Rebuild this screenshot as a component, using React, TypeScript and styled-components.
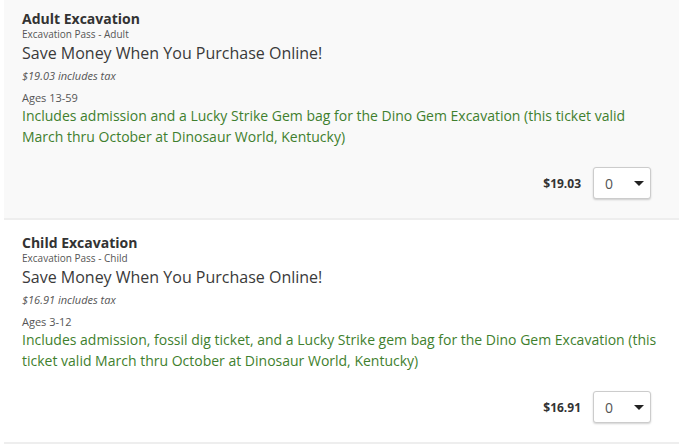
import React from 'react';
import styled, { createGlobalStyle } from 'styled-components';

const GlobalStyle = createGlobalStyle`
  html, body {
    margin: 0;
    padding: 0;
    background: #ffffff;
  }
  body {
    font-family: "Open Sans", "Liberation Sans", Arial, sans-serif;
    color: #333;
  }
`;

const List = styled.div`
  margin-top: -4px;
  padding: 0 21px 0 4px;
`;

const Card = styled.div<{ shaded?: boolean }>`
  display: flex;
  flex-direction: column;
  padding: 15px 16px 19px 18px;
  background: ${p => (p.shaded ? '#f9f9f9' : '#ffffff')};
  border-bottom: 2px solid #eeeeee;
`;

const Title = styled.div`
  font-size: 14px;
  font-weight: 700;
  line-height: 16px;
  color: #333;
`;

const Subtitle = styled.div`
  margin-top: 1px;
  font-size: 10px;
  line-height: 13px;
  color: #555;
`;

const Promo = styled.div`
  margin-top: 1px;
  font-size: 16px;
  line-height: 22px;
  color: #3a3a3a;
`;

const Tax = styled.div`
  margin-top: 4px;
  font-size: 11px;
  font-style: italic;
  line-height: 15px;
  color: #555;
`;

const Ages = styled.div`
  margin-top: 7px;
  font-size: 11px;
  line-height: 15px;
  color: #555;
`;

const Description = styled.div`
  font-size: 14px;
  line-height: 21px;
  color: #3f7f2e;
`;

const PriceRow = styled.div`
  display: flex;
  align-items: center;
  justify-content: flex-end;
  gap: 12px;
  margin-top: 20px;
  padding-right: 12px;
`;

const Price = styled.span`
  font-size: 12px;
  font-weight: 700;
  color: #333;
`;

const Select = styled.div`
  display: flex;
  align-items: center;
  justify-content: space-between;
  box-sizing: border-box;
  width: 58px;
  height: 32px;
  padding: 0 6px 0 11px;
  border: 1px solid #cccccc;
  border-radius: 3px;
  background: #fff;
  box-shadow: 0 1px 2px rgba(0, 0, 0, 0.18);
  font-size: 14px;
  color: #555;
`;

const Caret = styled.span`
  width: 0;
  height: 0;
  border-left: 5px solid transparent;
  border-right: 5px solid transparent;
  border-top: 5px solid #222;
`;

interface Ticket {
  name: string;
  pass: string;
  price: string;
  ages: string;
  description: string;
}

const tickets: Ticket[] = [
  {
    name: 'Adult Excavation',
    pass: 'Excavation Pass - Adult',
    price: '$19.03',
    ages: 'Ages 13-59',
    description:
      'Includes admission and a Lucky Strike Gem bag for the Dino Gem Excavation (this ticket valid March thru October at Dinosaur World, Kentucky)'
  },
  {
    name: 'Child Excavation',
    pass: 'Excavation Pass - Child',
    price: '$16.91',
    ages: 'Ages 3-12',
    description:
      'Includes admission, fossil dig ticket, and a Lucky Strike gem bag for the Dino Gem Excavation (this ticket valid March thru October at Dinosaur World, Kentucky)'
  }
];

export default function App() {
  return (
    <>
      <GlobalStyle />
      <List>
        {tickets.map((t, i) => (
          <Card key={t.name} shaded={i === 0}>
            <Title>{t.name}</Title>
            <Subtitle>{t.pass}</Subtitle>
            <Promo>Save Money When You Purchase Online!</Promo>
            <Tax>{t.price} includes tax</Tax>
            <Ages>{t.ages}</Ages>
            <Description>{t.description}</Description>
            <PriceRow>
              <Price>{t.price}</Price>
              <Select>
                0
                <Caret />
              </Select>
            </PriceRow>
          </Card>
        ))}
      </List>
    </>
  );
}
